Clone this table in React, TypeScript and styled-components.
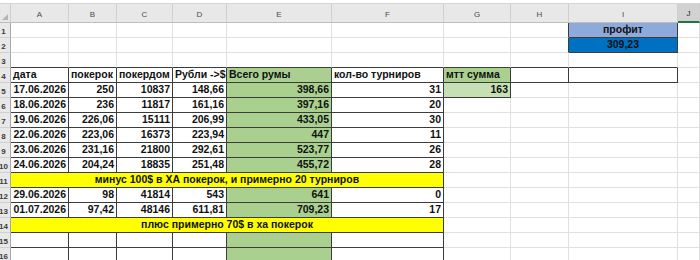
import React from "react";
import styled, { createGlobalStyle } from "styled-components";

const GlobalStyle = createGlobalStyle`
  html, body {
    margin: 0;
    padding: 0;
    background: #ffffff;
  }
  body {
    font-family: "Liberation Sans", Arial, sans-serif;
  }
`;

const COLS = [11, 58, 48, 56, 54, 105, 112, 67, 58, 109];
const LETTERS = ["A", "B", "C", "D", "E", "F", "G", "H", "I", "J"];

const GREEN = "#a9d08e";
const LIGHT_GREEN = "#c6e0b4";
const YELLOW = "#ffff00";
const DARK = "#3c3c3c";
const GRID = "#e0e0e0";

type Align = "left" | "right" | "center";

interface CellData {
  t?: string;
  fill?: string;
  align?: Align;
  r?: boolean;
  b?: boolean;
  span?: number;
}

const Sheet = styled.div`
  width: 700px;
  height: 260px;
  overflow: hidden;
  display: grid;
  grid-template-columns: ${COLS.map((c) => c + "px").join(" ")} 1fr;
  grid-template-rows: 4px 19px;
  grid-auto-rows: 15px;
  background: #fff;
`;

const TopStrip = styled.div`
  grid-column: 1 / -1;
  border-bottom: 1px solid #d4d4d4;
  box-sizing: border-box;
`;

const Corner = styled.div`
  position: relative;
  background: #e8e8e8;
  border-right: 1px solid #cfcfcf;
  border-bottom: 1px solid #bdbdbd;
  box-sizing: border-box;

  &::after {
    content: "";
    position: absolute;
    right: 2px;
    bottom: 2px;
    border-left: 6px solid transparent;
    border-bottom: 6px solid #b5b5b5;
  }
`;

const ColHead = styled.div<{ $selected?: boolean }>`
  display: flex;
  align-items: flex-end;
  justify-content: center;
  padding-bottom: 3px;
  box-sizing: border-box;
  font-size: 8px;
  color: ${(p) => (p.$selected ? "#262626" : "#4a4a4a")};
  background: ${(p) => (p.$selected ? "#d2d2d2" : "#e8e8e8")};
  border-right: 1px solid #cfcfcf;
  border-bottom: ${(p) => (p.$selected ? "2px solid #217346" : "1px solid #bdbdbd")};
`;

const RowHead = styled.div`
  display: flex;
  align-items: flex-end;
  justify-content: center;
  padding: 0 3px 1px 0;
  box-sizing: border-box;
  font-size: 8px;
  font-weight: bold;
  color: #3a3a3a;
  background: #e8e8e8;
  border-right: 1px solid #a8a8a8;
  border-bottom: 1px solid #d0d0d0;
  overflow: hidden;
  white-space: nowrap;
`;

const Cell = styled.div<{
  $fill?: string;
  $align: Align;
  $r?: boolean;
  $b?: boolean;
  $span?: number;
}>`
  grid-column: ${(p) => (p.$span ? `span ${p.$span}` : "auto")};
  display: flex;
  align-items: flex-end;
  justify-content: ${(p) =>
    p.$align === "right" ? "flex-end" : p.$align === "center" ? "center" : "flex-start"};
  padding: 0 2px 1px 2px;
  box-sizing: border-box;
  overflow: visible;
  white-space: nowrap;
  font-size: 10.5px;
  font-weight: bold;
  line-height: 13px;
  color: #111;
  background: ${(p) => p.$fill || "transparent"};
  border-right: 1px solid ${(p) => (p.$r ? DARK : GRID)};
  border-bottom: 1px solid ${(p) => (p.$b ? DARK : GRID)};
`;

const boxed = (t?: string, extra: Partial<CellData> = {}): CellData => ({
  t,
  align: "right",
  r: true,
  b: true,
  ...extra,
});

const dataRow = (vals: string[]): CellData[] => [
  boxed(vals[0]),
  boxed(vals[1]),
  boxed(vals[2]),
  boxed(vals[3]),
  boxed(vals[4], { fill: GREEN }),
  boxed(vals[5]),
];

const noteRow = (text: string): CellData[] => [
  boxed(text, { span: 6, fill: YELLOW, align: "center" }),
];

const empty = (): CellData => ({});

const tail = (n: number): CellData[] => Array.from({ length: n }, empty);

const ROWS: CellData[][] = [
  // 1
  [...tail(7), { r: true }, { t: "профит", fill: "#8ea9db", align: "center", r: true, b: true }, empty()],
  // 2
  [...tail(7), { r: true }, { t: "309,23", fill: "#0070c0", align: "center", r: true, b: true }, empty()],
  // 3
  [...Array.from({ length: 9 }, () => ({ b: true })), empty()],
  // 4
  [
    boxed("дата", { align: "left" }),
    boxed("покерок", { align: "left" }),
    boxed("покердом", { align: "left" }),
    boxed("Рубли ->$", { align: "left" }),
    boxed("Всего румы", { align: "left", fill: GREEN }),
    boxed("кол-во турниров", { align: "left" }),
    boxed("мтт сумма", { align: "left", fill: GREEN }),
    boxed(),
    boxed(),
    empty(),
  ],
  // 5
  [...dataRow(["17.06.2026", "250", "10837", "148,66", "398,66", "31"]), boxed("163", { fill: LIGHT_GREEN }), ...tail(3)],
  [...dataRow(["18.06.2026", "236", "11817", "161,16", "397,16", "20"]), ...tail(4)],
  [...dataRow(["19.06.2026", "226,06", "15111", "206,99", "433,05", "30"]), ...tail(4)],
  [...dataRow(["22.06.2026", "223,06", "16373", "223,94", "447", "11"]), ...tail(4)],
  [...dataRow(["23.06.2026", "231,16", "21800", "292,61", "523,77", "26"]), ...tail(4)],
  [...dataRow(["24.06.2026", "204,24", "18835", "251,48", "455,72", "28"]), ...tail(4)],
  // 11
  [...noteRow("минус 100$ в ХА покерок, и примерно 20 турниров"), ...tail(4)],
  [...dataRow(["29.06.2026", "98", "41814", "543", "641", "0"]), ...tail(4)],
  [...dataRow(["01.07.2026", "97,42", "48146", "611,81", "709,23", "17"]), ...tail(4)],
  // 14
  [...noteRow("плюс примерно 70$ в ха покерок"), ...tail(4)],
  [...dataRow(["", "", "", "", "", ""]), ...tail(4)],
  [...dataRow(["", "", "", "", "", ""]), ...tail(4)],
];

export default function App(): React.ReactElement {
  return (
    <>
      <GlobalStyle />
      <Sheet>
        <TopStrip />
        <Corner />
        {LETTERS.map((l) => (
          <ColHead key={l} $selected={l === "J"}>
            {l}
          </ColHead>
        ))}
        {ROWS.map((row, i) => (
          <React.Fragment key={`row${i}`}>
            <RowHead>{i + 1}</RowHead>
            {row.map((c, j) => (
              <Cell
                key={`c${i}-${j}`}
                $fill={c.fill}
                $align={c.align || "left"}
                $r={c.r}
                $b={c.b}
                $span={c.span}
              >
                {c.t}
              </Cell>
            ))}
          </React.Fragment>
        ))}
      </Sheet>
    </>
  );
}
